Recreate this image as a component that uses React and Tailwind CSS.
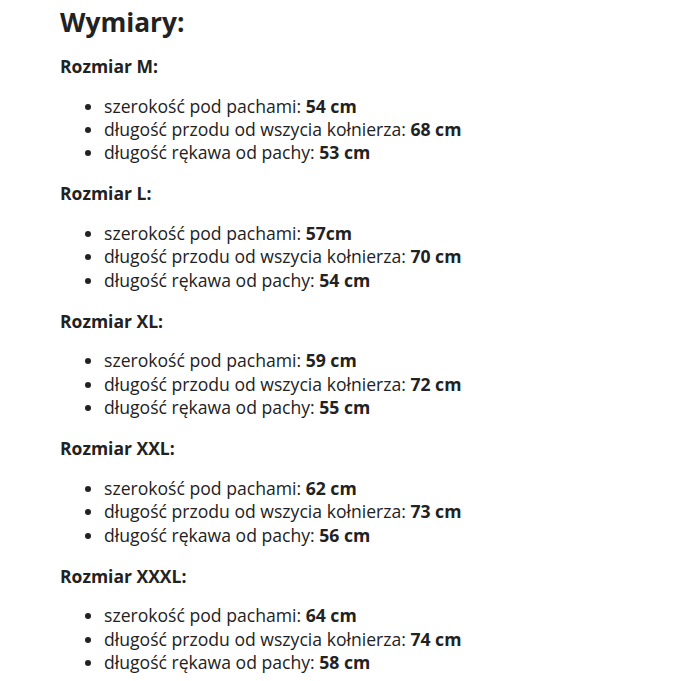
const sizes = [
  { name: 'M', chest: '54 cm', front: '68 cm', sleeve: '53 cm' },
  { name: 'L', chest: '57cm', front: '70 cm', sleeve: '54 cm' },
  { name: 'XL', chest: '59 cm', front: '72 cm', sleeve: '55 cm' },
  { name: 'XXL', chest: '62 cm', front: '73 cm', sleeve: '56 cm' },
  { name: 'XXXL', chest: '64 cm', front: '74 cm', sleeve: '58 cm' },
]

export default function App() {
  return (
    <div className="bg-white min-h-[681px] pl-[60px] text-[#222] font-['Open_Sans',sans-serif]">
      <h2 className="text-[26.3px] font-bold leading-[30px] pt-[7px]">Wymiary:</h2>
      {sizes.map((s, i) => (
        <div key={s.name} className={i === 0 ? 'mt-[18px]' : 'mt-[17.75px]'}>
          <h4 className="text-[17.5px] font-bold leading-[22px]">Rozmiar {s.name}:</h4>
          <ul className="list-disc pl-[44px] mt-[17.5px] text-[17.6px] leading-[23.4px]">
            <li>szerokość pod pachami: <b>{s.chest}</b></li>
            <li>długość przodu od wszycia kołnierza: <b>{s.front}</b></li>
            <li>długość rękawa od pachy: <b>{s.sleeve}</b></li>
          </ul>
        </div>
      ))}
    </div>
  )
}
